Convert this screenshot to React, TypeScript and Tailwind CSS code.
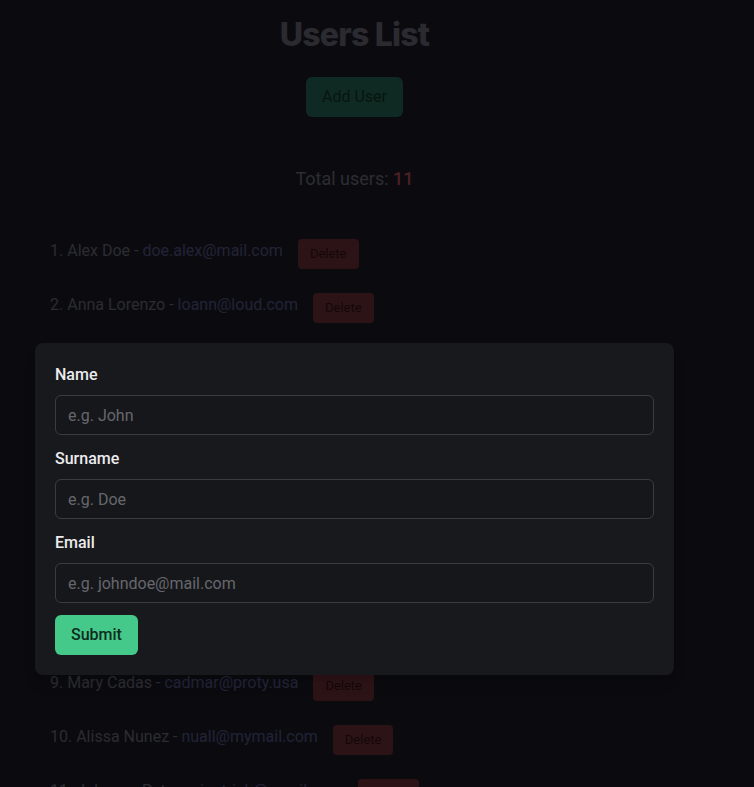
import React from "react";

const users = [
  { name: "Alex Doe", email: "doe.alex@mail.com" },
  { name: "Anna Lorenzo", email: "loann@loud.com" },
  { name: "Mark Owens", email: "owens.m@mail.com" },
  { name: "Julia Perez", email: "jperez@post.com" },
  { name: "Tom Becker", email: "tbecker@mail.com" },
  { name: "Sara Lind", email: "lind.sara@mail.com" },
  { name: "Paul Hardy", email: "hardyp@loud.com" },
  { name: "Nina Rossi", email: "rossi.n@mail.com" },
  { name: "Mary Cadas", email: "cadmar@proty.usa" },
  { name: "Alissa Nunez", email: "nuall@mymail.com" },
  { name: "Johanna Peters", email: "jpetrich@gmail.com" },
];

function Field({ label, placeholder }: { label: string; placeholder: string }) {
  return (
    <div className="mb-3">
      <label className="block mb-2 text-base leading-6 font-medium text-[#ececee]">{label}</label>
      <input
        className="w-full h-10 px-3 rounded-md border border-[#3b3c42] bg-[#16171b] text-base text-[#e5e5e7] placeholder:text-[#66676c] outline-none"
        placeholder={placeholder}
      />
    </div>
  );
}

export default function App() {
  return (
    <div
      className="relative h-[787px] overflow-hidden bg-[#0b0b0f]"
      style={{ fontFamily: "Roboto, 'Noto Sans', sans-serif" }}
    >
      <div className="w-[709px] pt-[17px]">
        <h1
          className="text-center text-[32px] leading-9 font-extrabold text-[#2a2a30] tracking-tight"
          style={{ fontFamily: "Inter, sans-serif" }}
        >
          Users List
        </h1>

        <div className="flex justify-center mt-6">
          <button className="h-10 px-4 rounded-md bg-[#0f2a22] text-base text-[#07150f]">Add User</button>
        </div>

        <p className="mt-12 text-center text-lg leading-7 text-[#2d2d33]">
          Total users: <span className="text-[#4d1f26] font-medium">11</span>
        </p>

        <ul className="mt-[31px] pl-[50px]">
          {users.map((u, i) => (
            <li key={i} className="flex items-center h-[54px]">
              <span className="text-base text-[#2c2c32]">
                {i + 1}. {u.name} - <span className="text-[#222338]">{u.email}</span>
              </span>
              <button className="ml-[15px] mt-[5px] h-[30px] px-3 rounded bg-[#2c1316] text-[13px] text-[#140709]">
                Delete
              </button>
            </li>
          ))}
        </ul>
      </div>

      {/* modal */}
      <div className="absolute top-[343px] left-[35px] w-[639px] rounded-lg bg-[#18191d] px-5 pt-5 pb-5 shadow-lg">
        <Field label="Name" placeholder="e.g. John" />
        <Field label="Surname" placeholder="e.g. Doe" />
        <Field label="Email" placeholder="e.g. johndoe@mail.com" />
        <button className="h-10 px-4 rounded-md bg-[#45c98b] text-base font-medium text-[#0d2b1c]">Submit</button>
      </div>
    </div>
  );
}
